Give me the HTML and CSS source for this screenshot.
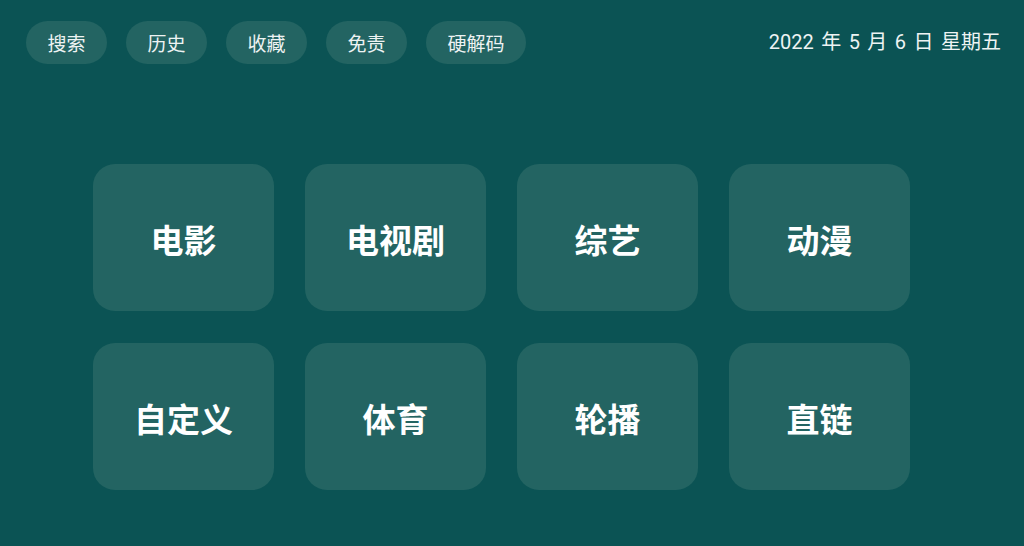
FILE: index.html
```html
<!DOCTYPE html>
<html lang="zh">
<head>
<meta charset="utf-8">
<link rel="stylesheet" href="styles.css">
</head>
<body>
<div class="page">
  <header class="top">
    <nav class="pills">
      <span class="pill">搜索</span>
      <span class="pill">历史</span>
      <span class="pill">收藏</span>
      <span class="pill">免责</span>
      <span class="pill">硬解码</span>
    </nav>
    <div class="date">2022 年 5 月 6 日 星期五</div>
  </header>
  <main class="grid">
    <div class="card">电影</div>
    <div class="card">电视剧</div>
    <div class="card">综艺</div>
    <div class="card">动漫</div>
    <div class="card">自定义</div>
    <div class="card">体育</div>
    <div class="card">轮播</div>
    <div class="card">直链</div>
  </main>
</div>
</body>
</html>
```
FILE: styles.css
```css
html, body {
  margin: 0;
  padding: 0;
}
body {
  background: #0b5354;
  width: 1024px;
  height: 546px;
  overflow: hidden;
  font-family: Roboto, "Noto Sans CJK SC", sans-serif;
  color: #eef3f3;
}
.page {
  display: flex;
  flex-direction: column;
}
.top {
  display: flex;
  justify-content: space-between;
  align-items: center;
  padding: 21px 23px 0 26px;
  height: 43px;
}
.pills {
  display: flex;
  gap: 19px;
}
.pill {
  display: flex;
  align-items: center;
  justify-content: center;
  height: 43px;
  padding: 0 21.5px;
  border-radius: 22px;
  background: #236462;
  font-size: 19px;
  font-family: "Noto Sans CJK SC", sans-serif;
}
.date {
  font-size: 20px;
  line-height: 43px;
  word-spacing: 2.5px;
}
.grid {
  display: grid;
  grid-template-columns: repeat(4, 181px);
  grid-auto-rows: 147px;
  column-gap: 31px;
  row-gap: 32px;
  padding: 100px 0 0 93px;
}
.card {
  background: #236462;
  border-radius: 22px;
  display: flex;
  align-items: center;
  justify-content: center;
  font-family: "Noto Sans CJK SC", sans-serif;
  font-weight: 700;
  font-size: 33px;
  color: #ffffff;
  padding-top: 2px;
  box-sizing: border-box;
}
```
